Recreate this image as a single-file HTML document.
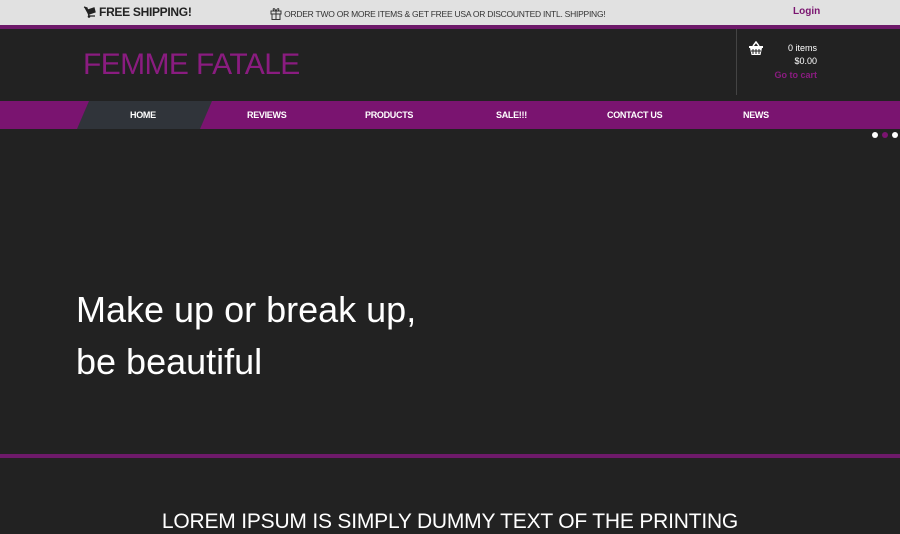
<!DOCTYPE html>
<html><head><meta charset="utf-8"><style>
*{margin:0;padding:0;box-sizing:border-box}
body{width:900px;height:529px;overflow:hidden;background:#222;font-family:"Liberation Sans",sans-serif;position:relative}
.top{position:absolute;top:0;left:0;width:900px;height:25px;background:#e1e1e1}
.pl{position:absolute;top:25px;left:0;width:900px;height:4px;background:#6e1a6a}
.hdr{position:absolute;top:29px;left:0;width:900px;height:72px;background:#222}
.nav{position:absolute;top:101px;left:0;width:900px;height:28px;background:#7a1470}
.t{position:absolute;white-space:nowrap}
.n{font-size:9px;font-weight:bold;color:#fff;top:110px;letter-spacing:-0.3px}
</style></head><body>
<div class="top"></div>
<div class="t" style="left:83px;top:5px;font-size:12px;font-weight:bold;color:#222;letter-spacing:-0.3px">
<svg width="13" height="12" viewBox="0 0 13 12" style="vertical-align:-2px"><path d="M1 1l3 1 2 8M6 10h6M5 4l6-2 1 4-6 2z" stroke="#222" stroke-width="1.3" fill="#222"/><circle cx="6" cy="10.5" r="1.3" fill="#222"/></svg> FREE SHIPPING!</div>
<div class="t" style="left:270px;top:7px;font-size:8.5px;color:#333;letter-spacing:-0.25px">
<svg width="12" height="13" viewBox="0 0 12 13" style="vertical-align:-3px"><rect x="1" y="4" width="10" height="3" fill="none" stroke="#333"/><rect x="2" y="7" width="8" height="5.5" fill="none" stroke="#333"/><path d="M6 4v8.5M6 4C4 0 2 2 4 4M6 4c2-4 4-2 2 0" stroke="#333" fill="none"/></svg> ORDER TWO OR MORE ITEMS &amp; GET FREE USA OR DISCOUNTED INTL. SHIPPING!</div>
<div class="t" style="left:793px;top:6px;font-size:10px;font-weight:bold;color:#7a1470">Login</div>
<div class="pl"></div>
<div class="hdr"></div>
<div class="t" style="left:83px;top:48px;font-size:30px;color:#8a1c80;letter-spacing:-0.6px">FEMME FATALE</div>
<div style="position:absolute;left:736px;top:29px;width:1px;height:66px;background:#444"></div>
<svg style="position:absolute;left:748px;top:41px" width="16" height="16" viewBox="0 0 16 16"><path d="M5 5L8 1l3 4" stroke="#fff" fill="none" stroke-width="1.5"/><path d="M1 5h14v2h-1l-1.5 7h-9L2 7H1z" fill="#fff"/><path d="M5 8v5M8 8v5M11 8v5M3 10h10" stroke="#222" stroke-width="1"/></svg>
<div class="t" style="right:83px;top:43px;font-size:9px;color:#fff;text-align:right">0 items</div>
<div class="t" style="right:83px;top:56px;font-size:9px;color:#fff">$0.00</div>
<div class="t" style="right:83px;top:70px;font-size:9px;font-weight:bold;color:#8a1c80">Go to cart</div>
<div class="nav"></div>
<div style="position:absolute;left:77px;top:101px;width:135px;height:28px;background:#30343a;clip-path:polygon(12px 0,135px 0,123px 28px,0 28px)"></div>
<div class="t n" style="left:130px">HOME</div>
<div class="t n" style="left:247px">REVIEWS</div>
<div class="t n" style="left:365px">PRODUCTS</div>
<div class="t n" style="left:496px">SALE!!!</div>
<div class="t n" style="left:607px">CONTACT US</div>
<div class="t n" style="left:743px">NEWS</div>
<div style="position:absolute;left:872px;top:132px;width:6px;height:6px;border-radius:50%;background:#fff"></div>
<div style="position:absolute;left:882px;top:132px;width:6px;height:6px;border-radius:50%;background:#7a1470"></div>
<div style="position:absolute;left:892px;top:132px;width:6px;height:6px;border-radius:50%;background:#fff"></div>
<div class="t" style="left:76px;top:284px;font-size:36px;line-height:52px;color:#fff">Make up or break up,<br>be beautiful</div>
<div style="position:absolute;left:0;top:454px;width:900px;height:4px;background:#6e1a6a"></div>
<div class="t" style="left:0;width:900px;text-align:center;top:510px;font-size:21px;color:#fff;letter-spacing:-0.2px">LOREM IPSUM IS SIMPLY DUMMY TEXT OF THE PRINTING</div>
</body></html>
